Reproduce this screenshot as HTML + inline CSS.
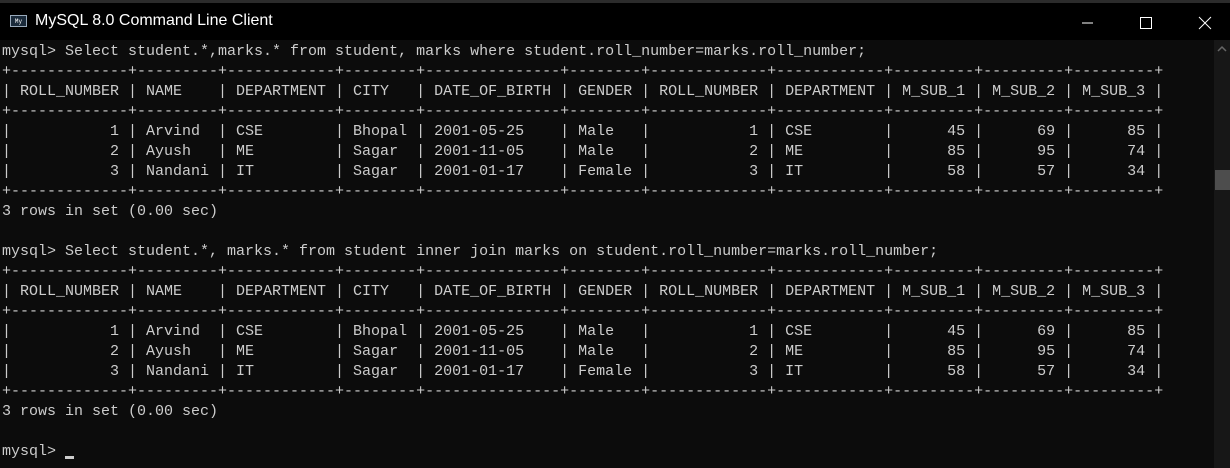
<!DOCTYPE html>
<html><head><style>
body{margin:0;width:1230px;height:468px;background:#0c0c0c;overflow:hidden;position:relative;font-family:"Liberation Sans",sans-serif}
#menu{position:absolute;top:0;left:0;width:1230px;height:3px;background:#2b2b2b}
#title{position:absolute;top:3px;left:0;width:1230px;height:37px;background:#000;color:#fff;font-size:16px}
#title .t{position:absolute;left:35px;top:9px}
#icon{position:absolute;left:10px;top:12px;width:17px;height:12px;background:#1a2a3a;border:1px solid #9ab;font:6px "Liberation Mono",monospace;color:#fff;line-height:12px;text-align:center;box-sizing:border-box}
pre{position:absolute;left:2px;top:42px;margin:0;font:15px/20px "Liberation Mono",monospace;color:#cccccc;letter-spacing:0}
#sb{position:absolute;right:0;top:40px;width:16px;height:428px;background:#171717}
#thumb{position:absolute;right:0;top:170px;width:15px;height:20px;background:#4d4d4d}
#cur{position:absolute;left:65px;top:456px;width:9px;height:3px;background:#ccc}
</style></head><body>
<div id="menu"></div>
<div id="title"><div id="icon">My</div><span class="t">MySQL 8.0 Command Line Client</span>
<svg style="position:absolute;left:1080px;top:13px" width="150" height="14">
<line x1="2" y1="7" x2="13" y2="7" stroke="#fff" stroke-width="1"/>
<rect x="60.5" y="1.5" width="11" height="11" fill="none" stroke="#fff"/>
<line x1="119" y1="1" x2="131" y2="13" stroke="#fff"/><line x1="131" y1="1" x2="119" y2="13" stroke="#fff"/>
</svg></div>
<div id="sb"><svg width="16" height="16" style="position:absolute;top:2px"><path d="M4 9 L8 5 L12 9" stroke="#666" fill="none" stroke-width="1.5"/></svg></div>
<div id="thumb"></div>
<pre>mysql&gt; Select student.*,marks.* from student, marks where student.roll_number=marks.roll_number;
+-------------+---------+------------+--------+---------------+--------+-------------+------------+---------+---------+---------+
| ROLL_NUMBER | NAME    | DEPARTMENT | CITY   | DATE_OF_BIRTH | GENDER | ROLL_NUMBER | DEPARTMENT | M_SUB_1 | M_SUB_2 | M_SUB_3 |
+-------------+---------+------------+--------+---------------+--------+-------------+------------+---------+---------+---------+
|           1 | Arvind  | CSE        | Bhopal | 2001-05-25    | Male   |           1 | CSE        |      45 |      69 |      85 |
|           2 | Ayush   | ME         | Sagar  | 2001-11-05    | Male   |           2 | ME         |      85 |      95 |      74 |
|           3 | Nandani | IT         | Sagar  | 2001-01-17    | Female |           3 | IT         |      58 |      57 |      34 |
+-------------+---------+------------+--------+---------------+--------+-------------+------------+---------+---------+---------+
3 rows in set (0.00 sec)

mysql&gt; Select student.*, marks.* from student inner join marks on student.roll_number=marks.roll_number;
+-------------+---------+------------+--------+---------------+--------+-------------+------------+---------+---------+---------+
| ROLL_NUMBER | NAME    | DEPARTMENT | CITY   | DATE_OF_BIRTH | GENDER | ROLL_NUMBER | DEPARTMENT | M_SUB_1 | M_SUB_2 | M_SUB_3 |
+-------------+---------+------------+--------+---------------+--------+-------------+------------+---------+---------+---------+
|           1 | Arvind  | CSE        | Bhopal | 2001-05-25    | Male   |           1 | CSE        |      45 |      69 |      85 |
|           2 | Ayush   | ME         | Sagar  | 2001-11-05    | Male   |           2 | ME         |      85 |      95 |      74 |
|           3 | Nandani | IT         | Sagar  | 2001-01-17    | Female |           3 | IT         |      58 |      57 |      34 |
+-------------+---------+------------+--------+---------------+--------+-------------+------------+---------+---------+---------+
3 rows in set (0.00 sec)

mysql&gt; </pre>
<div id="cur"></div>
</body></html>
